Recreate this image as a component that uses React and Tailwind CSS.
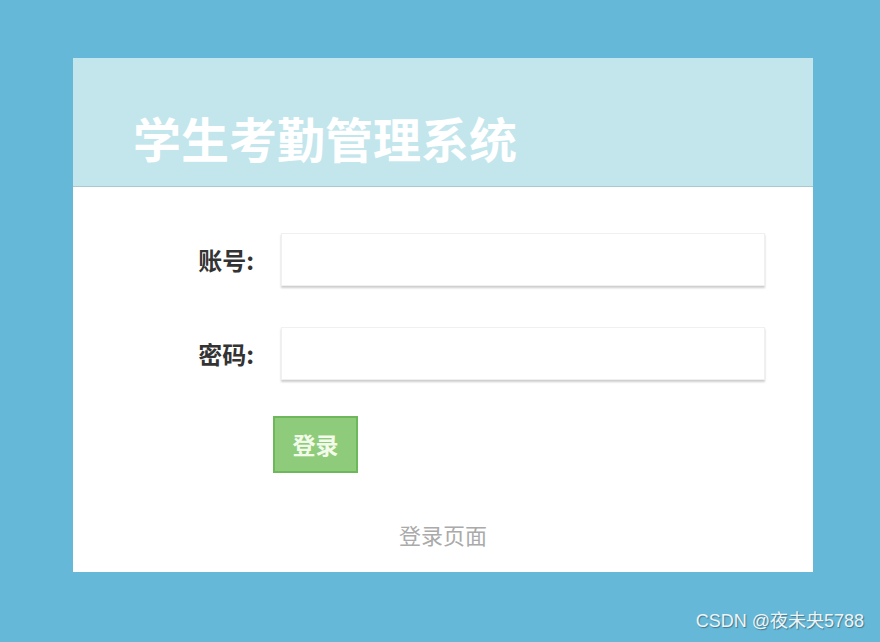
export default function App() {
  const cjk = { fontFamily: '"Noto Sans CJK SC", "Noto Sans", sans-serif' };

  return (
    <div className="relative h-[642px] w-full overflow-hidden bg-[#65b8d7] pt-[58px] pl-[73px]" style={cjk}>
      <div className="flex h-[514px] w-[740px] flex-col bg-white">
        <div className="flex h-[129px] items-center border-b border-[#a9c9d0] bg-[#c2e6ec] pl-[60px] pt-[30px]">
          <h1 className="text-[48px] font-bold leading-none text-white">学生考勤管理系统</h1>
        </div>

        <div className="flex flex-col pt-[46px]">
          <div className="flex items-center">
            <label className="w-[181px] text-right text-[24px] font-bold text-[#333]">账号:</label>
            <input className="ml-[27px] h-[53px] w-[484px] border border-[#f0f0f0] bg-white shadow-[0_2px_2px_rgba(0,0,0,0.2)] outline-none" />
          </div>
          <div className="mt-[41px] flex items-center">
            <label className="w-[181px] text-right text-[24px] font-bold text-[#333]">密码:</label>
            <input type="password" className="ml-[27px] h-[53px] w-[484px] border border-[#f0f0f0] bg-white shadow-[0_2px_2px_rgba(0,0,0,0.2)] outline-none" />
          </div>
          <div className="mt-[36px] pl-[200px]">
            <button className="h-[57px] w-[85px] border-2 border-[#6cb85a] bg-[#8ecb7a] text-[23px] font-bold text-[#f2fae9]">
              登录
            </button>
          </div>
          <p className="mt-[45px] text-center text-[22px] text-[#aaaaaa]">登录页面</p>
        </div>
      </div>

      <span
        className="absolute right-[16px] bottom-[7px] text-[18px] text-[#eef4f8] [text-shadow:1px_1px_1px_rgba(0,0,0,0.35)]"
        style={{ fontFamily: '"Liberation Sans", "Noto Sans CJK SC", sans-serif' }}
      >
        CSDN @夜未央5788
      </span>
    </div>
  );
}
